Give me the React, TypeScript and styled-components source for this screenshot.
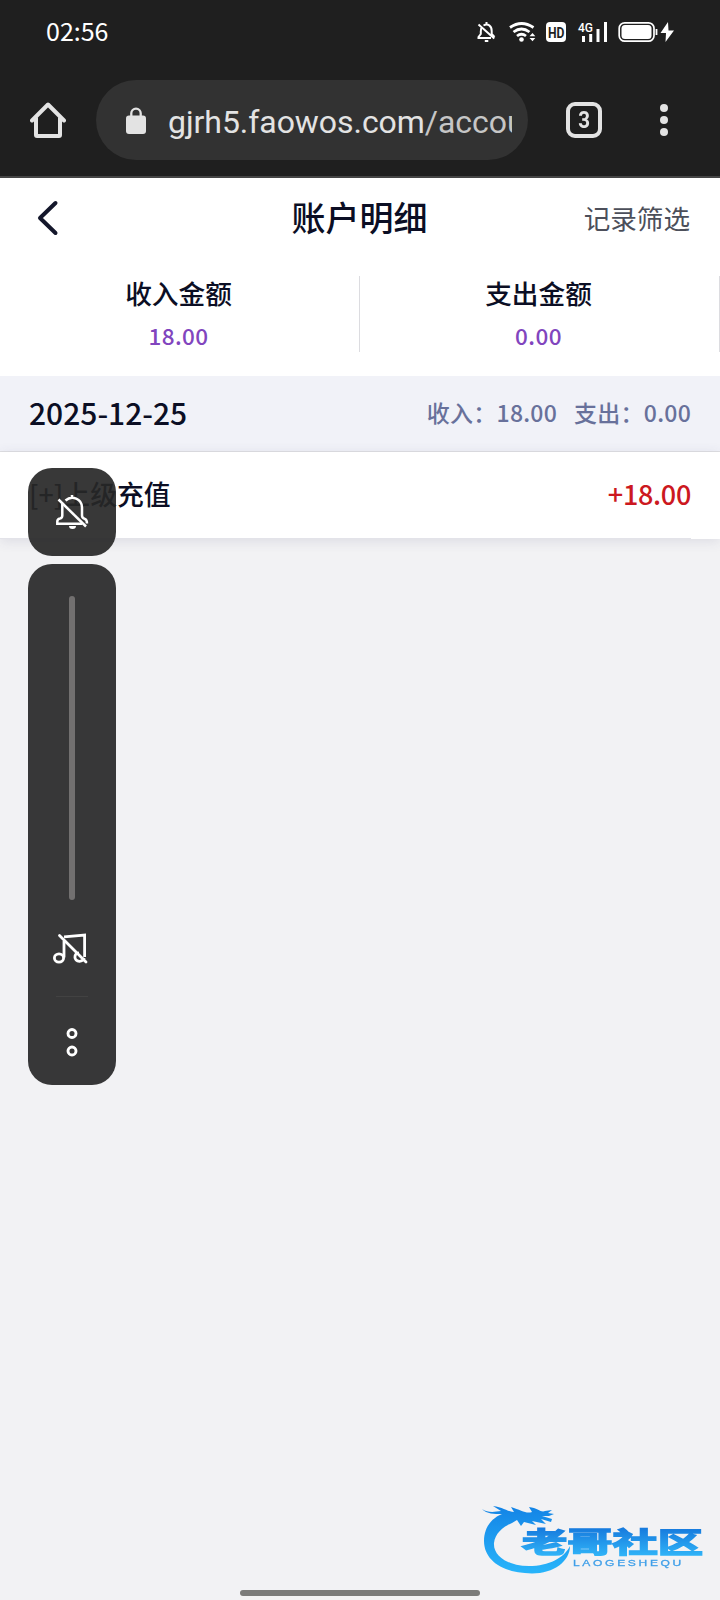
import React from 'react';
import styled, { createGlobalStyle } from 'styled-components';

const GlobalStyle = createGlobalStyle`
  * { box-sizing: border-box; }
  body { margin: 0; background: #f2f2f4; }
`;

const cjk = `'Noto Sans CJK SC', 'Noto Sans', sans-serif`;

const Screen = styled.div`
  position: relative;
  width: 720px;
  height: 1600px;
  overflow: hidden;
  background: #f2f2f4;
  font-family: ${cjk};
  color: #0b0e24;
`;

const BrowserChrome = styled.header`
  height: 178px;
  background: #1f1f1f;
  border-bottom: 2px solid #454545;
`;

const StatusBar = styled.div`
  height: 64px;
  display: flex;
  align-items: center;
  justify-content: space-between;
  padding: 0 45px 0 46px;
`;

const Clock = styled.span`
  color: #fff;
  font-size: 25px;
  line-height: 30px;
  padding-bottom: 4px;
`;

const StatusIcons = styled.svg`
  display: block;
  width: 200px;
  height: 28px;
`;

const Toolbar = styled.div`
  display: flex;
  align-items: center;
  height: 80px;
  margin-top: 16px;
`;

const HomeIcon = styled.svg`
  width: 36px;
  height: 37px;
  margin: 0 30px;
  flex: none;
`;

const AddressBar = styled.div`
  width: 432px;
  height: 80px;
  border-radius: 40px;
  background: #323232;
  display: flex;
  align-items: center;
  padding: 0 16px 0 30px;
`;

const LockIcon = styled.svg`
  width: 20px;
  height: 27px;
  margin-right: 22px;
  flex: none;
`;

const Url = styled.div`
  flex: 1;
  overflow: hidden;
  white-space: nowrap;
  font-family: Roboto, sans-serif;
  font-size: 32px;
  line-height: 44px;
  letter-spacing: -0.05px;
  padding-top: 3px;
  color: #e3e3e3;
`;

const UrlPath = styled.span`
  color: #c6c6c6;
`;

const TabCount = styled.div`
  width: 36px;
  height: 36px;
  margin-left: 38px;
  border: 4px solid #e3e3e3;
  border-radius: 9px;
  color: #e3e3e3;
  display: flex;
  align-items: center;
  justify-content: center;
  font: 700 24.5px/28px Roboto, sans-serif;
`;

const TabNumber = styled.span`
  transform: scaleX(0.84);
`;

const MenuIcon = styled.svg`
  width: 8px;
  height: 32px;
  margin-left: 58px;
`;

const Summary = styled.section`
  height: 198px;
  background: #fff;
`;

const TitleBar = styled.div`
  height: 80px;
  display: grid;
  grid-template-columns: 1fr auto 1fr;
  align-items: center;
  padding: 0 30px 0 37px;
`;

const BackIcon = styled.svg`
  width: 22px;
  height: 36px;
`;

const Title = styled.h1`
  margin: 0 0 0 -8px;
  padding-bottom: 2px;
  font-size: 34px;
  font-weight: 500;
  line-height: 40px;
`;

const FilterLink = styled.span`
  justify-self: end;
  font-size: 26.6px;
  font-weight: 400;
  line-height: 36px;
  padding-bottom: 1px;
  color: #4c4f5a;
`;

const Totals = styled.div`
  display: grid;
  grid-template-columns: 1fr 1fr;
  padding-top: 18px;
`;

const Total = styled.div`
  height: 76px;
  border-right: 1px solid #dcdce0;
  padding-right: 2px;
  display: flex;
  flex-direction: column;
  align-items: center;
`;

const TotalLabel = styled.span`
  font-size: 26.7px;
  font-weight: 500;
  line-height: 34px;
`;

const TotalValue = styled.span`
  margin-top: 9px;
  font-size: 22.5px;
  font-weight: 500;
  letter-spacing: 0.4px;
  line-height: 32px;
  color: #8145be;
`;

const DayRow = styled.div`
  height: 76px;
  background: #f1f2f8;
  border-bottom: 1px solid #dfdfe2;
  display: flex;
  align-items: center;
  justify-content: space-between;
  padding: 0 29px 4px;
`;

const DayDate = styled.span`
  font-size: 30px;
  font-weight: 500;
  line-height: 40px;
`;

const DayTotals = styled.span`
  display: flex;
  gap: 17px;
  font-size: 23px;
  font-weight: 500;
  line-height: 32px;
  letter-spacing: 0.25px;
  color: #68719b;
`;

const EntryRow = styled.div`
  height: 87px;
  background: #fff;
  box-shadow: 0 2px 12px rgba(60, 60, 110, 0.12);
  padding-right: 29px;
`;

const EntryContent = styled.div`
  height: 87px;
  padding: 0 0 2px 29px;
  border-bottom: 1px solid #e3e3e9;
  display: flex;
  align-items: center;
  justify-content: space-between;
`;

const EntryName = styled.span`
  font-size: 26.8px;
  font-weight: 500;
  line-height: 36px;
`;

const EntryAmount = styled.span`
  font-size: 27px;
  font-weight: 500;
  line-height: 36px;
  letter-spacing: -0.3px;
  color: #cc1820;
`;

const VolumeOverlay = styled.aside`
  position: absolute;
  left: 28px;
  top: 468px;
  width: 88px;
  display: flex;
  flex-direction: column;
  gap: 8px;
`;

const OverlayPanel = styled.div<{ $height: number }>`
  height: ${(p) => p.$height}px;
  border-radius: 24px;
  background: rgba(39, 39, 39, 0.92);
  display: flex;
  flex-direction: column;
  align-items: center;
`;

const MuteIcon = styled.svg`
  width: 36px;
  height: 38px;
  margin-top: 25px;
`;

const SliderTrack = styled.div`
  width: 6px;
  height: 304px;
  margin-top: 32px;
  border-radius: 3px;
  background: #727070;
`;

const MusicIcon = styled.svg`
  width: 38px;
  height: 34px;
  margin: 31px 0 0 -2px;
`;

const Divider = styled.div`
  width: 32px;
  height: 1px;
  margin-top: 31px;
  background: #424242;
`;

const MoreIcon = styled.svg`
  width: 12px;
  height: 30px;
  margin-top: 30px;
`;

const Watermark = styled.svg`
  position: absolute;
  left: 478px;
  top: 1498px;
  width: 230px;
  height: 80px;
  filter: blur(0.5px);
`;

const GestureBar = styled.div`
  position: absolute;
  left: 240px;
  bottom: 4px;
  width: 240px;
  height: 6px;
  border-radius: 3px;
  background: #7b7b7a;
`;

export default function App() {
  return (
    <Screen>
      <GlobalStyle />
      <BrowserChrome>
        <StatusBar>
          <Clock>02:56</Clock>
          <StatusIcons viewBox="475 18 200 28" fill="none" stroke="#fff" strokeWidth="2">
            <path d="M482 26.500C480.800 28 480.800 29 480.800 31.500V34L478.500 37V38H491M483.500 25.500C488 23 491.700 26 491.700 31V34L494.500 37M486.500 22V24M478.500 24.500 494.300 38.500M484.800 41H488.300" />
            <path d="M510 27.500Q521.500 19.500 533.500 27.500M513.500 32Q521.500 26 529.500 32M517 36Q521.500 32.500 526 36" strokeWidth="2.800" />
            <circle cx="521.500" cy="39.500" r="2.300" fill="#fff" stroke="none" />
            <path d="M529.500 36.200 532.500 33 535.300 36.200ZM529.500 38 532.500 41.300 535.300 38Z" fill="#fff" stroke="none" />
            <rect x="546" y="22" width="20" height="20" rx="4" fill="#fff" stroke="none" />
            <text x="548" y="37.500" fontFamily="Roboto, sans-serif" fontWeight="700" fontSize="15.500" textLength="16.500" lengthAdjust="spacingAndGlyphs" fill="#1f1f1f" stroke="none">HD</text>
            <text x="578" y="32" fontFamily="Roboto, sans-serif" fontWeight="500" fontSize="13" textLength="15" lengthAdjust="spacingAndGlyphs" fill="#fff" stroke="none">4G</text>
            <path d="M583.500 36V42M590.700 34V42M598 29V42M605.500 22V42" strokeWidth="3" />
            <rect x="619.200" y="22.800" width="34.800" height="18.400" rx="5.500" strokeWidth="1.700" />
            <rect x="621.500" y="25" width="30" height="14" rx="3.500" fill="#fff" stroke="none" />
            <path d="M656.500 29V35" strokeWidth="1.800" />
            <path d="M668 22 660.500 33H666L665.500 42 674 30.500H668.500Z" fill="#fff" stroke="none" />
          </StatusIcons>
        </StatusBar>
        <Toolbar>
          <HomeIcon viewBox="30 102 36 37" fill="none" stroke="#e3e3e3" strokeWidth="4" strokeLinejoin="round" strokeLinecap="round">
            <path d="M32 120.500 48 104.500 64 120.500M36 118V135Q36 136 37 136H59Q60 136 60 135V118" />
          </HomeIcon>
          <AddressBar>
            <LockIcon viewBox="0 0 20 27">
              <rect x="0" y="8.500" width="20" height="18.500" rx="3" fill="#e3e3e3" />
              <path d="M5.300 9V6.300A4.700 4.700 0 0 1 14.700 6.300V9" fill="none" stroke="#e3e3e3" strokeWidth="2.300" />
            </LockIcon>
            <Url>
              gjrh5.faowos.com<UrlPath>/accou</UrlPath>
            </Url>
          </AddressBar>
          <TabCount>
            <TabNumber>3</TabNumber>
          </TabCount>
          <MenuIcon viewBox="0 0 8 32" fill="#e3e3e3">
            <circle cx="4" cy="4" r="4" />
            <circle cx="4" cy="16" r="4" />
            <circle cx="4" cy="28" r="4" />
          </MenuIcon>
        </Toolbar>
      </BrowserChrome>

      <Summary>
        <TitleBar>
          <BackIcon viewBox="0 0 22 36" fill="none" stroke="#14172b" strokeWidth="4" strokeLinecap="round" strokeLinejoin="round">
            <path d="M18.500 3 3 18 18.500 33" />
          </BackIcon>
          <Title>账户明细</Title>
          <FilterLink>记录筛选</FilterLink>
        </TitleBar>
        <Totals>
          <Total>
            <TotalLabel>收入金额</TotalLabel>
            <TotalValue>18.00</TotalValue>
          </Total>
          <Total>
            <TotalLabel>支出金额</TotalLabel>
            <TotalValue>0.00</TotalValue>
          </Total>
        </Totals>
      </Summary>

      <DayRow>
        <DayDate>2025-12-25</DayDate>
        <DayTotals>
          <span>收入：18.00</span>
          <span>支出：0.00</span>
        </DayTotals>
      </DayRow>
      <EntryRow>
        <EntryContent>
          <EntryName>[+]上级充值</EntryName>
          <EntryAmount>+18.00</EntryAmount>
        </EntryContent>
      </EntryRow>

      <VolumeOverlay>
        <OverlayPanel $height={88}>
          <MuteIcon viewBox="54 493 36 38" fill="none" stroke="#fff" strokeWidth="2.500">
            <path d="M62.300 504V515.500Q62.300 518 60 518.500Q57.300 519 57.300 521.500V523.700H82M65.500 500.500C72 494.500 82 499 82 507.500V515.500Q82 518 84.500 518.800Q87 519.500 87 523.500M72 495V498.500" />
            <path d="M58.500 499.500 86 526.500" />
            <path d="M69 526H76A3.500 3 0 0 1 69 526Z" fill="#fff" stroke="none" />
          </MuteIcon>
        </OverlayPanel>
        <OverlayPanel $height={521}>
          <SliderTrack />
          <MusicIcon viewBox="52 931 38 34" fill="none" stroke="#fff" strokeWidth="2.800">
            <ellipse cx="59" cy="958" rx="4.600" ry="4.200" />
            <path d="M64 957.500V941M64 936.800 84.600 935V957M79 952.800C73.500 953 73.500 961.500 79.500 961.300C82 961.200 83.500 960 84.300 958" />
            <path d="M59.500 935.500 86 962" strokeLinecap="round" />
          </MusicIcon>
          <Divider />
          <MoreIcon viewBox="0 0 12 30" fill="none" stroke="#fff" strokeWidth="2.900">
            <circle cx="6" cy="6.500" r="4" />
            <circle cx="6" cy="24" r="4" />
          </MoreIcon>
        </OverlayPanel>
      </VolumeOverlay>

      <Watermark viewBox="478 1498 230 80">
        <defs>
          <linearGradient id="wm-blue" gradientUnits="userSpaceOnUse" x1="0" y1="1508" x2="0" y2="1572">
            <stop offset="0" stopColor="#1485e6" />
            <stop offset="1" stopColor="#28b4fa" />
          </linearGradient>
          <linearGradient id="wm-text" gradientUnits="userSpaceOnUse" x1="0" y1="1527" x2="0" y2="1556">
            <stop offset="0" stopColor="#1678dc" />
            <stop offset="1" stopColor="#30b4f8" />
          </linearGradient>
        </defs>
        <path
          fill="url(#wm-blue)"
          d="M482 1509C488 1513 494 1512 501 1511L493 1506C503 1507 508 1512 514 1512L511 1507C521 1510 526 1514 532 1512L529 1507C538 1508 541 1513 545 1511L552 1510 548 1513 554 1514 549 1516 542 1516 552 1519 551 1522 541 1519 546 1524 532 1521 536 1525 524 1522 521 1526 517 1520 512 1523C502 1527 495 1534 494 1543C493 1556 508 1566 529 1566C549 1566 564 1558 570 1546C570 1561 554 1573.500 532 1573.500C504 1573.500 484 1561 484 1541C484 1529 490 1519 502 1514C494 1514 487 1514 482 1509Z"
        />
        <text x="522" y="1552.500" fontFamily="Noto Sans CJK SC, sans-serif" fontWeight="700" fontSize="28.500" textLength="181" lengthAdjust="spacingAndGlyphs" fill="url(#wm-text)" stroke="url(#wm-text)" strokeWidth="1.600">老哥社区</text>
        <text x="573" y="1566" fontFamily="Liberation Sans, sans-serif" fontSize="9" letterSpacing="2" textLength="111" lengthAdjust="spacingAndGlyphs" fill="#3f9fe8" stroke="#3f9fe8" strokeWidth="0.300">LAOGESHEQU</text>
      </Watermark>
      <GestureBar />
    </Screen>
  );
}
